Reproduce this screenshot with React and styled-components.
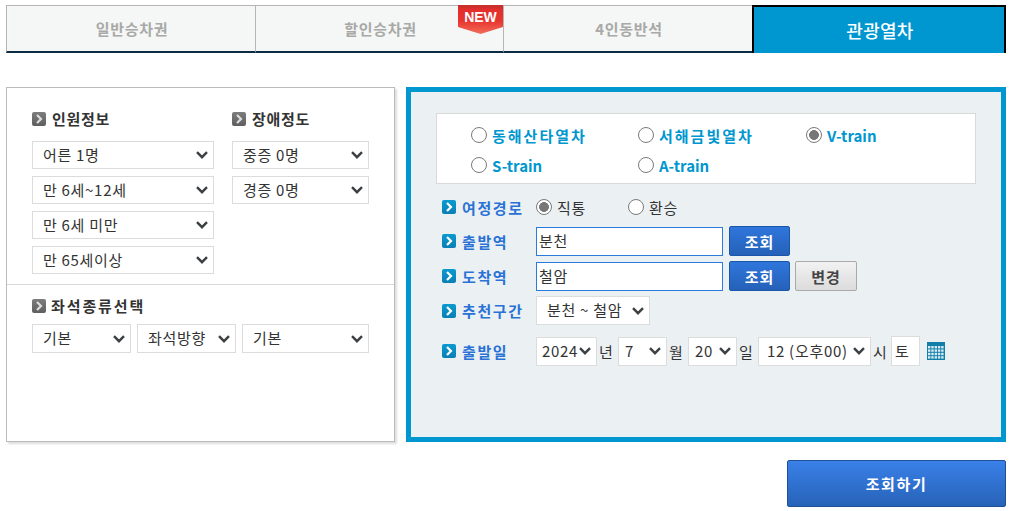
import React from "react";
import styled, { createGlobalStyle } from "styled-components";

const chevron = "data:image/svg+xml," + encodeURIComponent(
  '<svg xmlns="http://www.w3.org/2000/svg" width="12" height="8" viewBox="0 0 12 8"><path d="M1 1.2l5 5 5-5" fill="none" stroke="#3c4043" stroke-width="2.4"/></svg>'
);

const Global = createGlobalStyle`
  html, body { margin: 0; padding: 0; background: #fff; }
  body { font-family: "Noto Sans CJK KR", "Liberation Sans", sans-serif; color: #333; }
`;
const Page = styled.div`
  width: 1010px; height: 511px; overflow: hidden; box-sizing: border-box;
  padding: 5px 4px 0 6px;
`;
const Tabs = styled.div`display: flex; height: 48px; position: relative;`;
const Tab = styled.div`
  box-sizing: border-box; width: ${p => p.$w}px; position: relative; padding-left: 2px;
  display: flex; align-items: center; justify-content: center;
  font-size: ${p => (p.$active ? 18 : 15)}px; font-weight: ${p => (p.$active ? 500 : 700)};
  letter-spacing: ${p => (p.$active ? 0.3 : 0.7)}px;
  color: ${p => (p.$active ? "#fff" : "#a9a9a7")};
  background: ${p => (p.$active ? "#0096cf" : "#f5f7f6")};
  border-top: ${p => (p.$active ? "2px solid #000" : "1px solid #b5b5b5")};
  border-left: ${p => (p.$active ? "2px solid #000" : p.$first ? "1px solid #b5b5b5" : "none")};
  border-bottom: ${p => (p.$active ? "none" : "2px solid #0c2c44")};
  border-right: ${p => (p.$active ? "2px solid #000" : p.$last ? "none" : "1px solid #b5b5b5")};
`;
const NewBadge = styled.span`
  position: absolute; top: 0; left: 452px; width: 45px; height: 29px;
  background: linear-gradient(#c9302c 0, #c9302c 2px, #e22e2c 4px, #e8352f 55%, #f26d5a 100%);
  clip-path: polygon(0 0, 100% 0, 100% 76%, 50% 100%, 0 76%);
  color: #fff; font: 700 14px "Liberation Sans", sans-serif; text-align: center; line-height: 25px;
`;
const Main = styled.div`display: flex; gap: 11px; margin-top: 34px; height: 355px;`;
const LeftPanel = styled.section`
  box-sizing: border-box; width: 389px; background: #fff;
  border: 1px solid #bbb; box-shadow: 2px 2px 2px #ddd;
`;
const TopGroup = styled.div`
  display: flex; gap: 18px; padding: 20px 25px 0; height: 197px; box-sizing: border-box;
  border-bottom: 1px solid #d8d8d8;
`;
const Col = styled.div`display: flex; flex-direction: column; gap: 7px; width: ${p => p.$w}px;`;
const Heading = styled.h3`
  margin: 0 0 5px; height: 21px; display: flex; align-items: center; gap: ${p => p.$gap ?? 6}px; flex: none;
  font-size: 15px; font-weight: 700; color: #333; letter-spacing: ${p => p.$ls ?? 0.7}px; line-height: 20px;
`;
const Select = styled.select`
  appearance: none; flex: none;
  box-sizing: border-box; width: ${p => p.$w}px; height: ${p => p.$h || 28}px;
  border: 1px solid #dcdcdc; border-radius: 0; color: #333;
  background: #fff url("${chevron}") no-repeat right 5px center;
  font-family: "Noto Sans CJK KR", sans-serif; font-size: 15px; letter-spacing: .7px;
  padding: 0 0 2px ${p => p.$pad ?? 10}px; outline: none;
`;
const SeatGroup = styled.div`padding: 10px 25px 0; display: flex; flex-direction: column; gap: 3px;`;
const SeatRow = styled.div`display: flex; gap: 6px;`;
const RightPanel = styled.section`
  box-sizing: border-box; width: 600px; background: #ebf0f3; border: 5px solid #0096cf;
  padding: 21px 25px;
`;
const TrainBox = styled.div`
  box-sizing: border-box; width: 540px; height: 71px; background: #fff; border: 1px solid #d9d9d9;
  display: grid; grid-template-columns: 167px 168px 1fr; grid-auto-rows: 30px;
  padding: 6px 0 0 34px; margin-bottom: 10px;
`;
const RadioLabel = styled.label`
  display: inline-flex; align-items: center; gap: 5px;
  font-size: 15px; font-weight: ${p => (p.$plain ? 400 : 700)};
  color: ${p => (p.$plain ? "#333" : "#0096cf")};
  letter-spacing: ${p => (p.$plain ? 0.7 : p.$latin ? 0 : 2)}px;
  width: ${p => (p.$w ? `${p.$w}px` : "auto")};
`;
const Radio = styled.input.attrs({ type: "radio" })`
  appearance: none; box-sizing: border-box; margin: 0; width: 16px; height: 16px; border-radius: 50%;
  border: 1.5px solid #7a7a7a; background: #fff; flex: none;
  &:checked { background: radial-gradient(circle, #777 0 4.6px, #fff 5.2px); }
`;
const FormRows = styled.div`display: flex; flex-direction: column;`;
const Row = styled.div`
  display: flex; align-items: center; height: ${p => p.$h}px; margin-top: ${p => p.$mt || 0}px;
`;
const RowLabel = styled.div`
  width: 94px; margin-left: 6px; display: flex; align-items: center; gap: 6px; flex: none;
  color: #2a72d5; font-size: 15px; font-weight: 700; letter-spacing: 1.6px;
`;
const TextInput = styled.input`
  box-sizing: border-box; width: 187px; height: 29px; align-self: flex-end;
  border: 1px solid #2a7ae0; background: #fff;
  padding: 0 2px 2px; font-family: "Noto Sans CJK KR", sans-serif; font-size: 15px; letter-spacing: .7px;
  color: #333; outline: none;
`;
const Btn = styled.button`
  box-sizing: border-box; width: ${p => p.$w}px; height: 30px; margin-left: ${p => p.$ml}px; padding: 0;
  border-radius: 2px; font-family: "Noto Sans CJK KR", sans-serif; font-size: 15px; font-weight: 700;
  letter-spacing: 1px;
  border: 1px solid ${p => (p.$gray ? "#aaa" : "#1c56a8")};
  color: ${p => (p.$gray ? "#444" : "#fff")};
  background: ${p => (p.$gray ? "linear-gradient(#f2f2f2,#dcdcdc)" : "linear-gradient(#2f76dc,#2561b8)")};
`;
const Unit = styled.span`font-size: 15px; color: #333; width: ${p => p.$w}px; padding-left: 2px; box-sizing: border-box; flex: none;`;
const DayBox = styled.div`
  box-sizing: border-box; width: 29px; height: 30px; background: #fff; border: 1px solid #dcdcdc;
  font-size: 15px; line-height: 27px; padding-left: 3px; color: #333; margin-right: 7px;
`;
const Footer = styled.div`display: flex; justify-content: flex-end; margin-top: 18px;`;
const Submit = styled.button`
  box-sizing: border-box; width: 219px; height: 47px; border-radius: 2px; border: 1px solid #1f4f96;
  background: linear-gradient(#3a80e8, #2763b8); color: #fff;
  font-family: "Noto Sans CJK KR", sans-serif; font-size: 15px; font-weight: 700; letter-spacing: 1.6px;
`;

const Bullet = ({ blue }) => (
  <svg width="14" height="14" viewBox="0 0 14 14" style={{ flex: "none" }}>
    <defs>
      <linearGradient id={blue ? "bb" : "bg"} x1="0" y1="0" x2="0" y2="1">
        <stop offset="0" stopColor={blue ? "#0a9ad0" : "#7d7d7d"} />
        <stop offset="1" stopColor={blue ? "#0a7fb5" : "#5f5f5f"} />
      </linearGradient>
    </defs>
    <rect width="14" height="14" rx="2" fill={`url(#${blue ? "bb" : "bg"})`} />
    <path d="M5 3l4 4-4 4" fill="none" stroke={blue ? "#fff" : "#ddd"} strokeWidth="2.2" />
  </svg>
);
const Calendar = () => (
  <svg width="18" height="18" viewBox="0 0 18 18">
    <rect width="18" height="18" fill="#127fa9" />
    {[0, 1, 2, 3].map(r => [0, 1, 2, 3, 4].map(c => (
      <rect key={`${r}${c}`} x={1 + c * 3.3} y={4 + r * 3.4} width="2.4" height="2.4" fill="#d8ebf3" />
    )))}
  </svg>
);
const Opt = ({ w, h, pad, children }) => (
  <Select $w={w} $h={h} $pad={pad} defaultValue={children}><option>{children}</option></Select>
);

export default function App() {
  return (
    <Page>
      <Global />
      <Tabs>
        <Tab $w={250} $first>일반승차권</Tab>
        <Tab $w={248}>할인승차권</Tab>
        <Tab $w={248} $last>4인동반석</Tab>
        <Tab $w={254} $active>관광열차</Tab>
        <NewBadge>NEW</NewBadge>
      </Tabs>
      <Main>
        <LeftPanel>
          <TopGroup>
            <Col $w={182}>
              <Heading><Bullet />인원정보</Heading>
              <Opt w={182}>어른 1명</Opt>
              <Opt w={182}>만 6세~12세</Opt>
              <Opt w={182}>만 6세 미만</Opt>
              <Opt w={182}>만 65세이상</Opt>
            </Col>
            <Col $w={137}>
              <Heading><Bullet />장애정도</Heading>
              <Opt w={137}>중증 0명</Opt>
              <Opt w={137}>경증 0명</Opt>
            </Col>
          </TopGroup>
          <SeatGroup>
            <Heading $ls={1.9} $gap={5}><Bullet />좌석종류선택</Heading>
            <SeatRow>
              <Opt w={99} h={29}>기본</Opt>
              <Opt w={99} h={29}>좌석방향</Opt>
              <Opt w={127} h={29}>기본</Opt>
            </SeatRow>
          </SeatGroup>
        </LeftPanel>
        <RightPanel>
          <TrainBox>
            <RadioLabel><Radio name="t" />동해산타열차</RadioLabel>
            <RadioLabel><Radio name="t" />서해금빛열차</RadioLabel>
            <RadioLabel $latin><Radio name="t" defaultChecked />V-train</RadioLabel>
            <RadioLabel $latin><Radio name="t" />S-train</RadioLabel>
            <RadioLabel $latin><Radio name="t" />A-train</RadioLabel>
          </TrainBox>
          <FormRows>
            <Row $h={26}>
              <RowLabel><Bullet blue />여정경로</RowLabel>
              <RadioLabel $plain $w={92}><Radio name="r" defaultChecked />직통</RadioLabel>
              <RadioLabel $plain><Radio name="r" />환승</RadioLabel>
            </Row>
            <Row $h={30} $mt={6}>
              <RowLabel><Bullet blue />출발역</RowLabel>
              <TextInput defaultValue="분천" />
              <Btn $w={61} $ml={6}>조회</Btn>
            </Row>
            <Row $h={30} $mt={5}>
              <RowLabel><Bullet blue />도착역</RowLabel>
              <TextInput defaultValue="철암" />
              <Btn $w={61} $ml={6}>조회</Btn>
              <Btn $w={62} $ml={5} $gray>변경</Btn>
            </Row>
            <Row $h={29} $mt={5}>
              <RowLabel><Bullet blue />추천구간</RowLabel>
              <Opt w={114} h={29}>분천 ~ 철암</Opt>
            </Row>
            <Row $h={30} $mt={11}>
              <RowLabel><Bullet blue />출발일</RowLabel>
              <Opt w={61} h={29} pad={5}>2024</Opt>
              <Unit $w={21}>년</Unit>
              <Opt w={49} h={29} pad={6}>7</Opt>
              <Unit $w={21}>월</Unit>
              <Opt w={49} h={29} pad={6}>20</Opt>
              <Unit $w={21}>일</Unit>
              <Opt w={113} h={29} pad={8}>12 (오후00)</Opt>
              <Unit $w={20}>시</Unit>
              <DayBox>토</DayBox>
              <Calendar />
            </Row>
          </FormRows>
        </RightPanel>
      </Main>
      <Footer><Submit>조회하기</Submit></Footer>
    </Page>
  );
}
